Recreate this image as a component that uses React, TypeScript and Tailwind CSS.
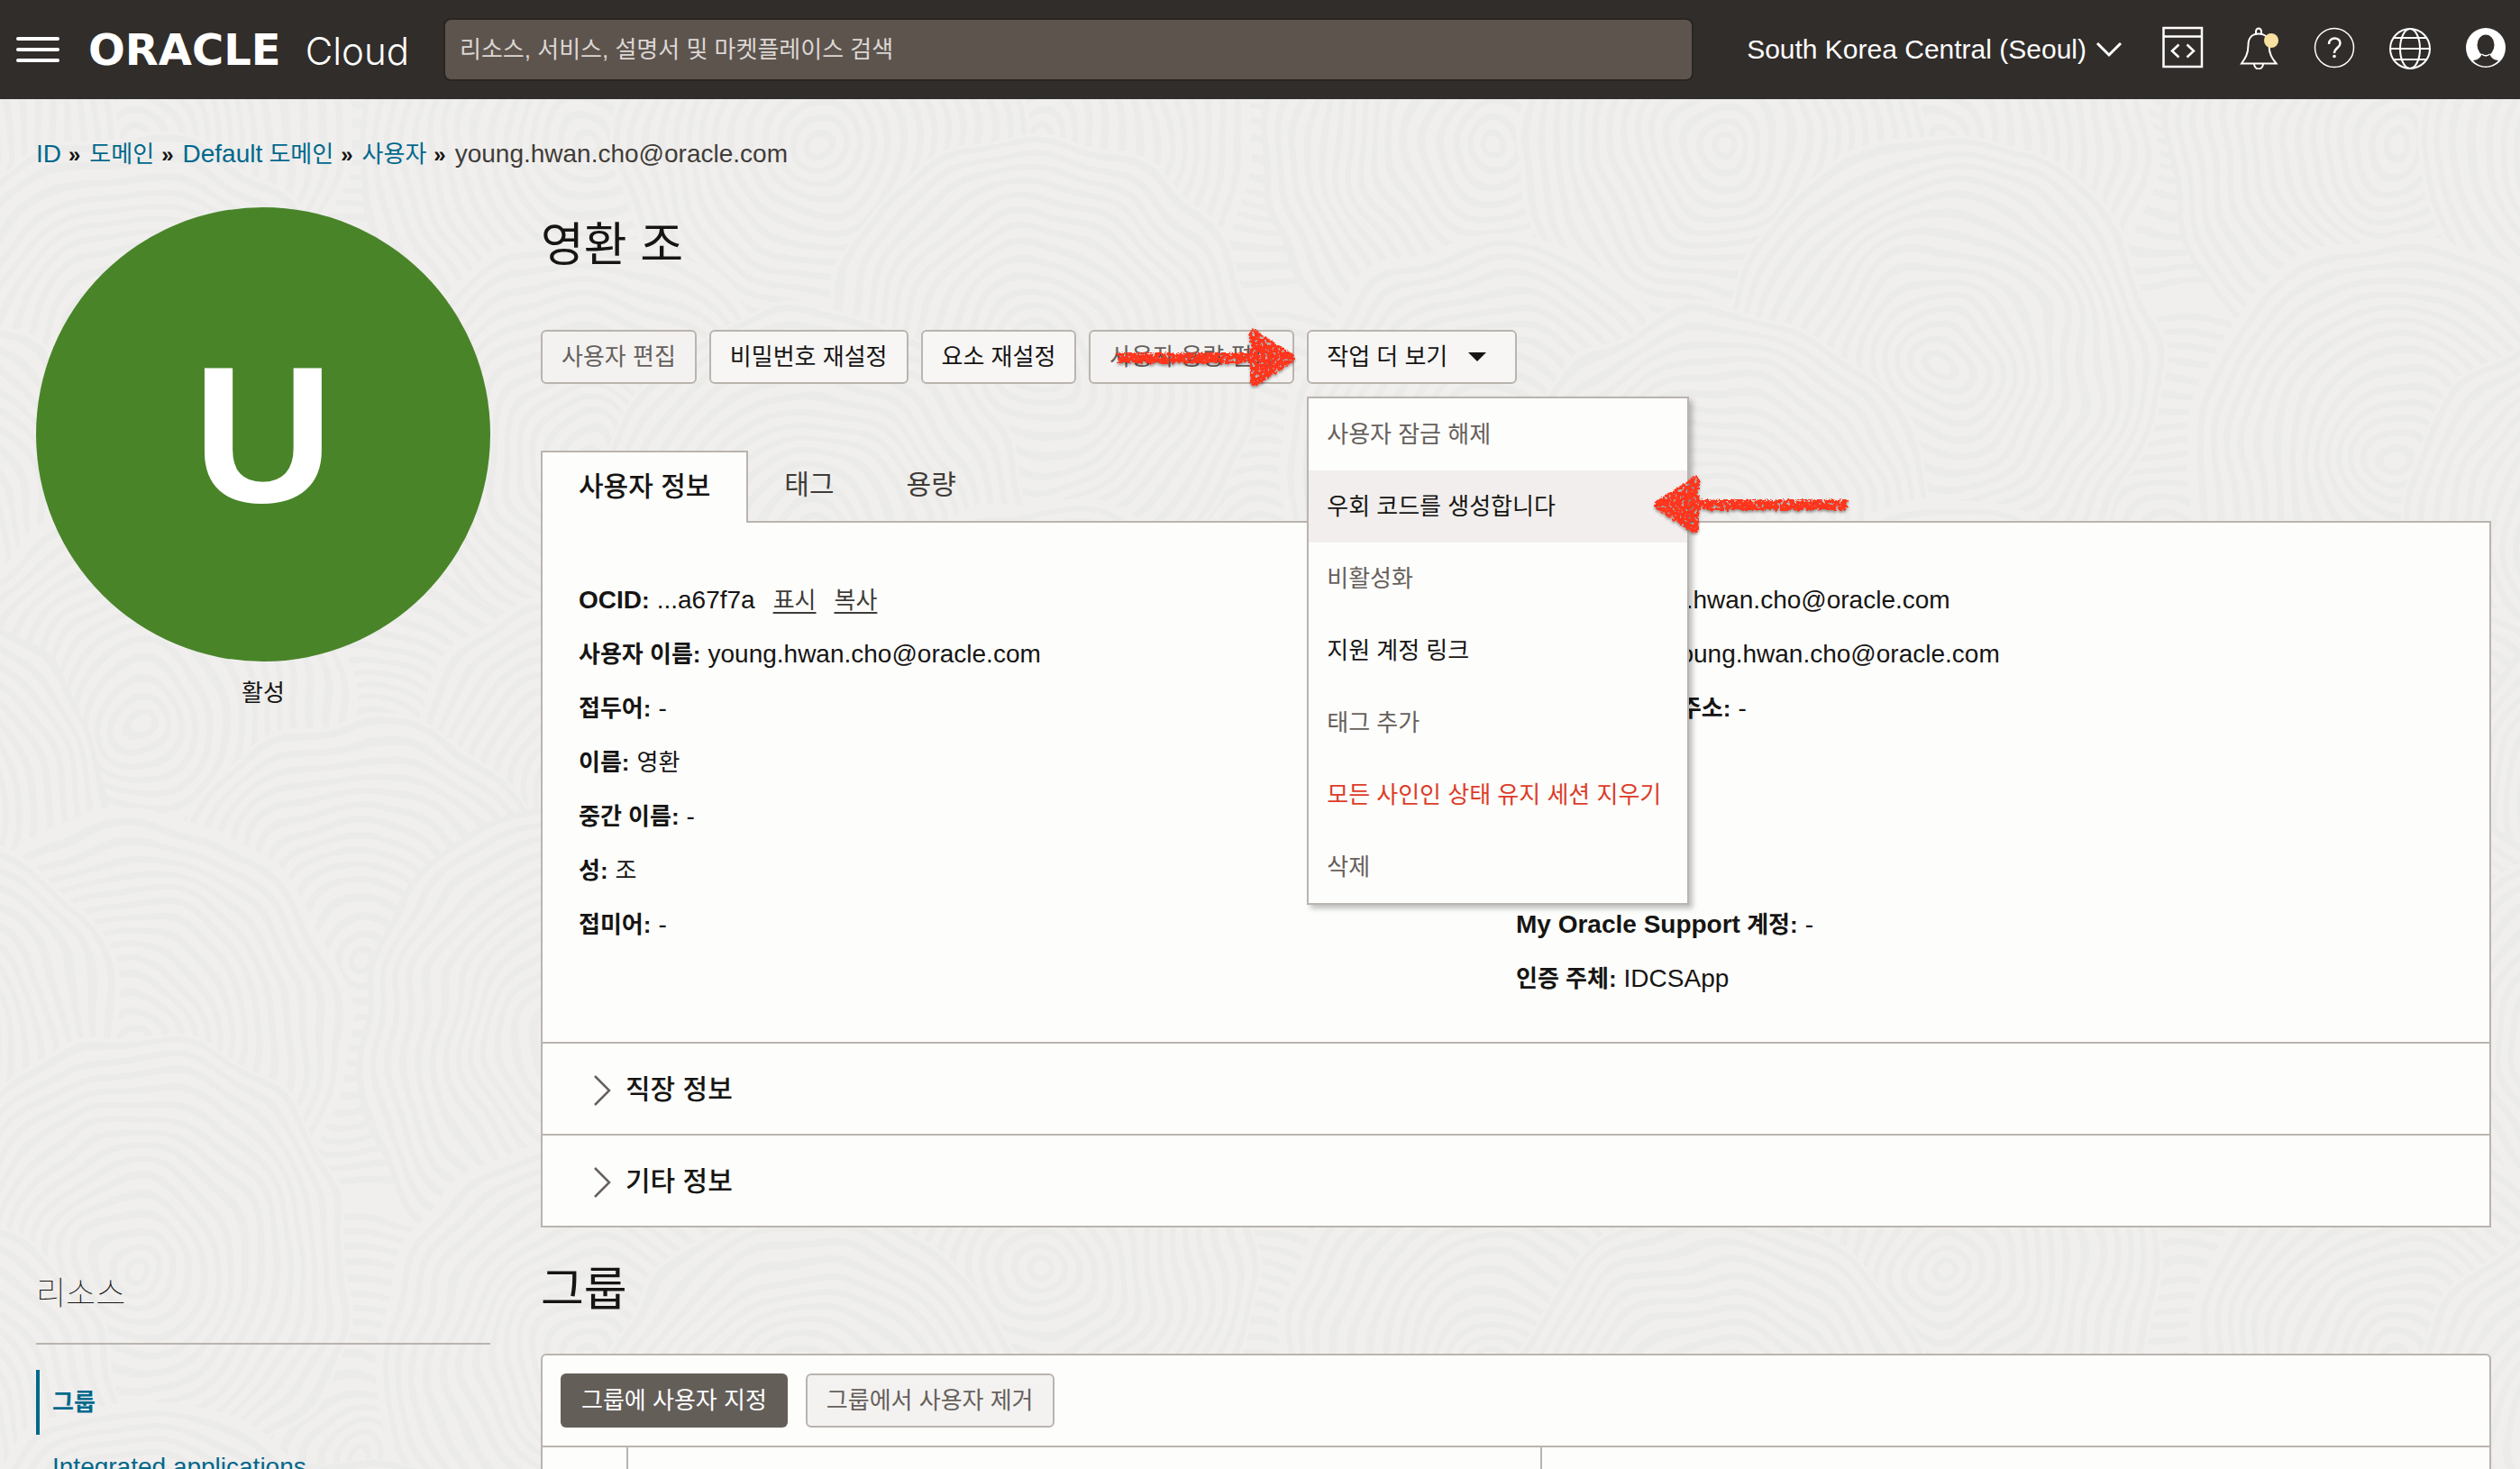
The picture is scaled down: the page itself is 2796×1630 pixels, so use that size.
import type { ReactNode } from "react";

const LINK = "text-[#00688c]";

/** Centres of the ring groups in one background tile, painted back to front. */
const RINGS = [
  { x: 400, y: 60, r: 260 },
  { x: 150, y: 150, r: 250 },
  { x: 652, y: 160, r: 270 },
  { x: 909, y: 160, r: 245 },
  { x: 400, y: 620, r: 270 },
  { x: 149, y: 407, r: 260 },
  { x: 652, y: 510, r: 250 },
  { x: 900, y: 600, r: 260 },
  { x: 400, y: 860, r: 240 },
  { x: 160, y: 800, r: 250 },
  { x: 660, y: 880, r: 230 },
  { x: 920, y: 900, r: 220 },
];

function RingGroup({ x, y, r }: { x: number; y: number; r: number }) {
  const radii: number[] = [];
  for (let v = 14; v < r; v += 17) radii.push(v);
  return (
    <g>
      <ellipse cx={x} cy={y} rx={r * 0.94} ry={r} fill="#f1efee" />
      {radii.map((v) => (
        <ellipse key={v} cx={x} cy={y} rx={v * 0.94} ry={v} fill="none" stroke="#ebebe9" strokeWidth="7" />
      ))}
    </g>
  );
}

function Backdrop() {
  return (
    <svg className="absolute inset-0 -z-10 size-full" aria-hidden="true">
      <defs>
        <filter id="ripple" x="0" y="0" width="100%" height="100%">
          <feTurbulence type="fractalNoise" baseFrequency="0.012" numOctaves="1" seed="4" result="n" />
          <feDisplacementMap in="SourceGraphic" in2="n" xChannelSelector="R" yChannelSelector="G" scale="40" />
        </filter>
        <pattern id="rings" width="1004" height="1000" patternUnits="userSpaceOnUse">
          <rect width="1004" height="1000" fill="#f1efee" />
          {[-1000, 0, 1000].map((dy) =>
            RINGS.map((c) =>
              [-1004, 0, 1004].map((dx) => (
                <RingGroup key={`${c.x}-${c.y}-${dx}-${dy}`} x={c.x + dx} y={c.y + dy} r={c.r} />
              )),
            ),
          )}
        </pattern>
      </defs>
      <rect x="-40" y="-40" width="110%" height="110%" fill="url(#rings)" filter="url(#ripple)" />
    </svg>
  );
}

/** Hand-drawn arrow; `shaft` is the length of its line in pixels. */
function ChalkArrow({ shaft, flip = false }: { shaft: number; flip?: boolean }) {
  const width = shaft + 52;
  return (
    <svg
      width={width}
      height="76"
      viewBox={`${150 - shaft} 0 ${width} 76`}
      className={flip ? "-scale-x-100 overflow-visible" : "overflow-visible"}
      aria-hidden="true"
    >
      <defs>
        <filter id="chalk" x="-5%" y="-20%" width="110%" height="140%">
          <feTurbulence type="fractalNoise" baseFrequency="0.28" numOctaves="3" seed="7" result="n" />
          <feDisplacementMap in="SourceGraphic" in2="n" xChannelSelector="R" yChannelSelector="G" scale="6" result="d" />
          <feColorMatrix in="n" type="matrix" values="0 0 0 0 0  0 0 0 0 0  0 0 0 0 0  0 -14 0 0 9.4" result="holes" />
          <feComposite in="d" in2="holes" operator="in" result="c" />
          <feDropShadow in="c" dx="0" dy="2" stdDeviation="1.5" floodColor="#000" floodOpacity="0.4" />
        </filter>
      </defs>
      <g filter="url(#chalk)" fill="#ff341a">
        <path d={`M${150 - shaft} 32H154V44H${150 - shaft}Z`} />
        <path d="M151 7Q156 3 161 10L200 35Q204 38 200 41L161 67Q154 73 151 67Z" />
      </g>
    </svg>
  );
}

function IconButton({ label, children }: { label: string; children: ReactNode }) {
  return (
    <button type="button" aria-label={label} className="size-12 shrink-0">
      <svg viewBox="0 0 48 48" className="size-12" fill="none" stroke="#fff" strokeWidth="2">
        {children}
      </svg>
    </button>
  );
}

function Header() {
  return (
    <header className="flex h-[110px] shrink-0 items-center bg-[#312d2a] pr-[14px] pl-[18px] text-white">
      <button type="button" aria-label="메뉴" className="mr-8 flex w-12 shrink-0 flex-col gap-2">
        <span className="h-1 rounded-sm bg-white" />
        <span className="h-1 rounded-sm bg-white" />
        <span className="h-1 rounded-sm bg-white" />
      </button>
      <a href="#home" className="flex w-[356px] shrink-0 items-baseline justify-between leading-none whitespace-nowrap">
        <span className="font-['DejaVu_Sans'] text-[48px] font-bold">ORACLE</span>
        <span className="font-['Inter'] text-[42px] font-light">Cloud</span>
      </a>
      <input
        type="search"
        aria-label="검색"
        placeholder="리소스, 서비스, 설명서 및 마켓플레이스 검색"
        className="ml-10 h-[66px] min-w-0 flex-1 rounded-md bg-[#5d544e] px-4 text-[26px] text-white outline-2 outline-[#292522] placeholder:text-[#dcd7d3]"
      />
      <button type="button" className="ml-[61px] flex shrink-0 items-center gap-[10px] text-[30px] leading-10">
        South Korea Central (Seoul)
        <svg width="30" height="18" viewBox="0 0 30 18" fill="none" stroke="#fff" strokeWidth="3" aria-hidden="true">
          <path d="M2 2L15 15L28 2" />
        </svg>
      </button>
      <div className="-mt-1 ml-[43px] flex gap-9">
        <IconButton label="개발자 도구">
          <path d="M2.5 2H45V45H2.5Z M2.5 11.5H45" strokeWidth="2.5" />
          <path d="M19.5 20.5L12 27.5L19.5 34.5M28.5 20.5L36 27.5L28.5 34.5" strokeWidth="2.5" />
        </IconButton>
        <IconButton label="알림">
          <path d="M21 9.5V6a3 3.500 0 0 1 6 0V9.5" />
          <path d="M24 8.5C16 8.5 12.5 14 12.5 21C12.5 31 9 36 5 41.5H43.5C39 36 35.5 31 35.5 21C35.5 14 32 8.5 24 8.5Z" />
          <path d="M19 42a5 5.500 0 0 0 10 0" />
          <circle cx="38" cy="16" r="8" fill="#f8e0a0" stroke="none" />
        </IconButton>
        <IconButton label="도움말">
          <circle cx="24" cy="24" r="21.5" strokeWidth="1.5" />
          <path d="M18 20C18 11.5 30.5 11.5 30.5 19C30.5 24 24 24 24 30" strokeWidth="2.5" />
          <circle cx="24" cy="33.5" r="1.8" fill="#fff" stroke="none" />
        </IconButton>
        <IconButton label="언어">
          <circle cx="24" cy="25" r="22" />
          <ellipse cx="24" cy="25" rx="11" ry="22" />
          <path d="M2 25H46M6 13H42M6 37H42" />
        </IconButton>
        <IconButton label="프로필">
          <mask id="person">
            <rect width="48" height="48" fill="#fff" stroke="none" />
            <ellipse cx="24" cy="21" rx="9.5" ry="11.5" fill="#000" stroke="none" />
            <path
              d="M10 38C14 37.5 18 36 19.5 31L24 33.5L28.5 31C30 36 34 37.5 38 38C34.5 42 30 44.5 24 44.5C18 44.5 13.5 42 10 38Z"
              fill="#000"
              stroke="none"
            />
          </mask>
          <circle cx="24" cy="24" r="22" fill="#fff" stroke="none" mask="url(#person)" />
          <path d="M19.5 31Q24 34.5 28.5 31" strokeWidth="1.5" />
        </IconButton>
      </div>
    </header>
  );
}

function Crumb({ children }: { children: ReactNode }) {
  return (
    <li className="flex items-baseline">
      <a href="#crumb" className={`text-[26px] ${LINK}`}>
        {children}
      </a>
      <span aria-hidden="true" className="mr-[10px] ml-2 text-[24px] font-bold">
        »
      </span>
    </li>
  );
}

function Action({ children, disabled = false }: { children: ReactNode; disabled?: boolean }) {
  return (
    <button
      type="button"
      disabled={disabled}
      className="flex h-[60px] items-center rounded-md border-2 border-[#bab4ae] bg-[#f7f6f5] px-[21px] text-[26px] whitespace-nowrap disabled:bg-[#f3f2f1] disabled:text-[#66605b]"
    >
      {children}
    </button>
  );
}

const MENU = [
  { label: "사용자 잠금 해제", style: "text-[#66605b]" },
  { label: "우회 코드를 생성합니다", style: "bg-[#f1eeed]", arrow: true },
  { label: "비활성화", style: "text-[#66605b]" },
  { label: "지원 계정 링크", style: "" },
  { label: "태그 추가", style: "text-[#66605b]" },
  { label: "모든 사인인 상태 유지 세션 지우기", style: "text-[#dc3c28]" },
  { label: "삭제", style: "text-[#66605b]" },
];

function MoreActions() {
  return (
    <div className="relative z-10">
      <button
        type="button"
        aria-haspopup="menu"
        aria-expanded="true"
        className="flex h-[60px] items-center gap-[23px] rounded-md border-2 border-[#bab4ae] bg-[#f7f6f5] pr-8 pl-5 text-[26px] whitespace-nowrap"
      >
        작업 더 보기
        <svg width="20" height="10" viewBox="0 0 20 10" aria-hidden="true">
          <path d="M0 0H20L10 10Z" fill="#161513" />
        </svg>
      </button>
      <div className="pointer-events-none absolute top-[-7px] right-full mr-3">
        <ChalkArrow shaft={146} />
      </div>
      <ul
        role="menu"
        className="absolute top-full left-0 mt-[14px] w-[424px] border-2 border-[#bab4ae] bg-[#fdfdfc] shadow-[4px_4px_6px_rgba(0,0,0,0.25)]"
      >
        {MENU.map((item) => (
          <li key={item.label} role="none" className="relative">
            <button
              type="button"
              role="menuitem"
              className={`h-20 w-full px-5 text-left text-[26px] whitespace-nowrap ${item.style}`}
            >
              {item.label}
            </button>
            {item.arrow && (
              <div className="pointer-events-none absolute top-0 left-[382px] z-10">
                <ChalkArrow shaft={164} flip />
              </div>
            )}
          </li>
        ))}
      </ul>
    </div>
  );
}

function Field({ label, children }: { label: ReactNode; children: ReactNode }) {
  return (
    <div className="flex h-[60px] items-baseline gap-2 leading-[60px] whitespace-nowrap">
      <dt className="text-[26px] font-bold">{label}:</dt>
      <dd className="text-[28px]">{children}</dd>
    </div>
  );
}

function Section({ title }: { title: string }) {
  return (
    <button
      type="button"
      aria-expanded="false"
      className="flex h-[102px] w-full items-center gap-4 border-t-2 border-[#bab4ae] pl-14 text-[30px] font-medium"
    >
      <svg width="20" height="34" viewBox="0 0 20 34" fill="none" stroke="#66605b" strokeWidth="2.5" className="mt-1" aria-hidden="true">
        <path d="M2 1L18 17L2 33" />
      </svg>
      {title}
    </button>
  );
}

function UserDetails() {
  return (
    <main className="min-w-0">
      <h1 className="mt-1 text-[52px] leading-[76px]">영환 조</h1>
      <div className="mt-14 flex gap-[14px]">
        <Action disabled>사용자 편집</Action>
        <Action>비밀번호 재설정</Action>
        <Action>요소 재설정</Action>
        <Action disabled>사용자 용량 편집</Action>
        <MoreActions />
      </div>
      <div role="tablist" className="mt-[74px] flex text-[30px]">
        <button
          type="button"
          role="tab"
          aria-selected="true"
          className="relative -mb-[2px] h-[80px] border-2 border-b-0 border-[#bab4ae] bg-[#fdfdfc] px-10 pb-1 font-medium"
        >
          사용자 정보
        </button>
        <button type="button" role="tab" aria-selected="false" className="px-10 pb-1 text-[#403c38]">
          태그
        </button>
        <button type="button" role="tab" aria-selected="false" className="px-10 pb-1 text-[#403c38]">
          용량
        </button>
      </div>
      <section className="border-2 border-[#bab4ae] bg-[#fdfdfc]">
        <div className="grid grid-cols-2 px-10 pt-14 pb-10">
          <dl>
            <Field label={<span className="text-[28px]">OCID</span>}>
              ...a67f7a
              <a href="#show" className="ml-5 text-[26px] text-[#403c38] underline underline-offset-4">
                표시
              </a>
              <a href="#copy" className="ml-5 text-[26px] text-[#403c38] underline underline-offset-4">
                복사
              </a>
            </Field>
            <Field label="사용자 이름">young.hwan.cho@oracle.com</Field>
            <Field label="접두어">-</Field>
            <Field label="이름">
              <span className="text-[26px]">영환</span>
            </Field>
            <Field label="중간 이름">-</Field>
            <Field label="성">
              <span className="text-[26px]">조</span>
            </Field>
            <Field label="접미어">-</Field>
          </dl>
          <dl className="flex flex-col justify-between">
            <div>
              <Field label="전자메일">young.hwan.cho@oracle.com</Field>
              <Field label="기본 전자메일">young.hwan.cho@oracle.com</Field>
              <Field label="복구용 전자메일 주소">-</Field>
            </div>
            <div className="mt-[180px]">
              <Field
                label={
                  <>
                    <span className="text-[28px]">My Oracle Support</span> 계정
                  </>
                }
              >
                -
              </Field>
              <Field label="인증 주체">IDCSApp</Field>
            </div>
          </dl>
        </div>
        <Section title="직장 정보" />
        <Section title="기타 정보" />
      </section>
    </main>
  );
}

export default function App() {
  return (
    <div className="relative isolate flex h-screen flex-col overflow-hidden bg-[#f1efee] font-['Liberation_Sans','Noto_Sans_CJK_KR',sans-serif] text-[#161513]">
      <Backdrop />
      <Header />
      <nav aria-label="이동 경로" className="px-10 pt-10">
        <ol className="flex h-10 items-baseline leading-[42px]">
          <Crumb>
            <span className="text-[28px]">ID</span>
          </Crumb>
          <Crumb>도메인</Crumb>
          <Crumb>
            <span className="text-[28px]">Default</span> 도메인
          </Crumb>
          <Crumb>사용자</Crumb>
          <li className="text-[28px] text-[#403c38]">young.hwan.cho@oracle.com</li>
        </ol>
      </nav>
      <div className="mt-10 grid grid-cols-[504px_minmax(0,1fr)] gap-x-14 pr-8 pl-10">
        <div className="flex flex-col items-center">
          <div className="flex aspect-square w-full items-center justify-center rounded-full bg-[#498429] text-[216px] leading-none font-bold text-white">
            U
          </div>
          <p className="mt-[15px] text-[26px] leading-10">활성</p>
        </div>
        <UserDetails />
        <aside>
          <h2 className="mt-12 border-b-2 border-[#bab4ae] pb-7 text-[36px] leading-[52px] font-thin">리소스</h2>
          <ul className="mt-7">
            <li>
              <a
                href="#groups"
                aria-current="page"
                className={`flex h-[72px] items-center border-l-4 border-[#00688c] pl-[14px] text-[26px] font-bold ${LINK}`}
              >
                그룹
              </a>
            </li>
            <li>
              <a href="#apps" className={`flex h-[72px] items-center pl-[18px] text-[28px] ${LINK}`}>
                Integrated applications
              </a>
            </li>
          </ul>
        </aside>
        <section className="min-w-0">
          <h2 className="mt-[31px] text-[52px] leading-[76px]">그룹</h2>
          <div className="mt-[33px] rounded-t-md border-2 border-b-0 border-[#bab4ae] bg-[#fdfdfc]">
            <div className="flex gap-5 p-5">
              <button type="button" className="h-[60px] rounded-md bg-[#645e59] px-[23px] text-[26px] text-white">
                그룹에 사용자 지정
              </button>
              <Action disabled>그룹에서 사용자 제거</Action>
            </div>
            <table className="w-full table-fixed border-t-2 border-[#bab4ae]">
              <thead>
                <tr className="h-20">
                  <td className="w-[94px] border-r-2 border-[#bab4ae]" />
                  <td className="w-[1014px] border-r-2 border-[#bab4ae]" />
                  <td />
                </tr>
              </thead>
            </table>
          </div>
        </section>
      </div>
    </div>
  );
}
